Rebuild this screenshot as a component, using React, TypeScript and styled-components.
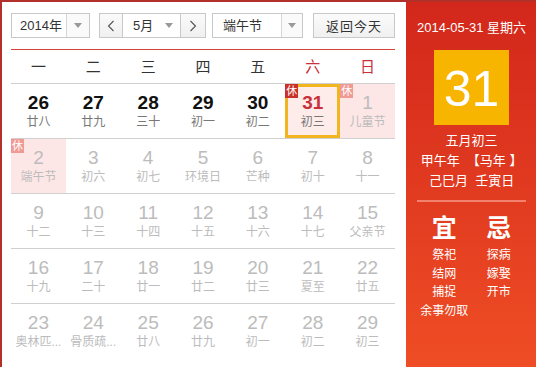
import React from "react";
import styled, { createGlobalStyle, css } from "styled-components";

const Global = createGlobalStyle`
  html, body { margin: 0; padding: 0; background: #fff; }
  body { font-family: "Liberation Sans", "Noto Sans CJK SC", sans-serif; }
  * { box-sizing: border-box; }
`;

const Root = styled.div`
  width: 536px;
  height: 367px;
  display: flex;
  border-top: 2px solid #b3302a;
  border-left: 2px solid #b3302a;
  overflow: hidden;
`;

const LeftPanel = styled.div`
  width: 404px;
  flex: none;
  padding: 11px 11px 0 9px;
  background: #fff;
`;

const Toolbar = styled.div`
  display: flex;
  align-items: center;
  height: 25px;
`;

const Select = styled.div<{ $w: number; $ml?: number }>`
  display: flex;
  height: 25px;
  width: ${(p) => p.$w}px;
  margin-left: ${(p) => p.$ml ?? 0}px;
  border: 1px solid #c8c8c8;
  background: #fff;
  font-size: 13px;
  color: #333;
`;

const SelectLabel = styled.div<{ $pl: number }>`
  flex: 1;
  display: flex;
  align-items: center;
  padding-left: ${(p) => p.$pl}px;
  line-height: 23px;
`;

const ArrowArea = styled.div<{ $w: number; $divider?: boolean }>`
  width: ${(p) => p.$w}px;
  display: flex;
  align-items: center;
  justify-content: center;
  ${(p) =>
    p.$divider &&
    css`
      border-left: 1px solid #d6d6d6;
      background: #fafafa;
    `}
`;

const Triangle = styled.span`
  width: 0;
  height: 0;
  border-left: 4px solid transparent;
  border-right: 4px solid transparent;
  border-top: 5px solid #999;
`;

const NavButton = styled.div<{ $side: "l" | "r"; $ml?: number }>`
  width: ${(p) => (p.$side === "l" ? 23 : 25)}px;
  height: 25px;
  margin-left: ${(p) => p.$ml ?? 0}px;
  display: flex;
  align-items: center;
  justify-content: center;
  border: 1px solid #c8c8c8;
  ${(p) => (p.$side === "l" ? "border-right: none;" : "border-left: none;")}
  background: linear-gradient(#fafafa, #f0f0f0);
`;

const MonthSelect = styled.div`
  width: 59px;
  height: 25px;
  display: flex;
  border: 1px solid #c8c8c8;
  background: #fff;
  font-size: 13px;
  color: #333;
`;

const TodayButton = styled.div`
  margin-left: auto;
  width: 82px;
  height: 25px;
  display: flex;
  align-items: center;
  justify-content: center;
  border: 1px solid #c8c8c8;
  background: linear-gradient(#fbfbfb, #f0f0f0);
  font-size: 13px;
  color: #333;
  letter-spacing: 1px;
`;

const RedRule = styled.div`
  height: 1px;
  background: #d8423a;
  margin-top: 11px;
`;

const WeekHeader = styled.div`
  display: grid;
  grid-template-columns: repeat(7, 1fr);
  height: 34px;
  border-bottom: 1px solid #d0d0d0;
`;

const WeekDay = styled.div<{ $weekend: boolean }>`
  display: flex;
  align-items: center;
  justify-content: center;
  font-size: 15px;
  color: ${(p) => (p.$weekend ? "#c9313a" : "#333")};
  padding-bottom: 2px;
`;

const Row = styled.div`
  display: grid;
  grid-template-columns: repeat(7, 1fr);
  height: 55px;
  border-bottom: 1px solid #d0d0d0;
  &:last-child { border-bottom: none; }
`;

const Cell = styled.div<{ $holiday: boolean; $selected: boolean }>`
  position: relative;
  display: flex;
  flex-direction: column;
  align-items: center;
  padding-top: 9px;
  min-width: 0;
  background: ${(p) => (p.$selected ? "#fdecea" : p.$holiday ? "#fde6e6" : "transparent")};
  ${(p) =>
    p.$selected &&
    css`
      box-shadow: inset 0 0 0 3px #f1b51f;
    `}
`;

const DayNum = styled.div<{ $tone: "cur" | "red" | "other" }>`
  font-size: 19px;
  line-height: 20px;
  font-weight: ${(p) => (p.$tone === "other" ? "normal" : "bold")};
  color: ${(p) => (p.$tone === "red" ? "#c9313a" : p.$tone === "cur" ? "#111" : "#bcbcbc")};
`;

const Lunar = styled.div<{ $other: boolean }>`
  font-size: 12px;
  line-height: 16px;
  margin-top: 1px;
  white-space: nowrap;
  color: ${(p) => (p.$other ? "#bcbcbc" : "#777")};
`;

const Badge = styled.span<{ $light: boolean }>`
  position: absolute;
  top: 0;
  left: 0;
  width: 13px;
  height: 14px;
  font-size: 11px;
  line-height: 14px;
  text-align: center;
  color: #fff;
  background: ${(p) => (p.$light ? "#f09a94" : "#c9302a")};
`;

const RightPanel = styled.div`
  flex: 1;
  display: flex;
  flex-direction: column;
  align-items: center;
  padding: 17px 11px 0;
  background: linear-gradient(#d2271b, #ef4d25);
  color: #fff;
`;

const DateLine = styled.div`
  font-size: 13px;
  line-height: 18px;
  white-space: nowrap;
`;

const BigDay = styled.div`
  margin-top: 13px;
  width: 75px;
  height: 75px;
  background: #f8b500;
  display: flex;
  align-items: center;
  justify-content: center;
  font-size: 50px;
  line-height: 1;
  padding-top: 2px;
`;

const LunarInfo = styled.div`
  margin-top: 6px;
  font-size: 13px;
  line-height: 20px;
  text-align: center;
  white-space: pre;
`;

const PinkRule = styled.div`
  align-self: stretch;
  height: 2px;
  background: #f2826e;
  margin-top: 9px;
`;

const Almanac = styled.div`
  align-self: stretch;
  display: grid;
  grid-template-columns: 1fr 1fr;
  margin-top: 11px;
`;

const AlmanacCol = styled.div`
  display: flex;
  flex-direction: column;
  align-items: center;
`;

const AlmanacTitle = styled.div`
  font-size: 25px;
  font-weight: bold;
  line-height: 30px;
  margin-bottom: 3px;
`;

const AlmanacItem = styled.div`
  font-size: 12px;
  line-height: 18.5px;
  white-space: nowrap;
`;

const Chevron = ({ dir }: { dir: "l" | "r" }) => (
  <svg width="8" height="12" viewBox="0 0 8 12">
    <path
      d={dir === "l" ? "M6.5 1 L1.5 6 L6.5 11" : "M1.5 1 L6.5 6 L1.5 11"}
      fill="none"
      stroke="#555"
      strokeWidth="1.1"
    />
  </svg>
);

type Day = {
  n: number;
  l: string;
  other?: boolean;
  holiday?: boolean;
  rest?: boolean;
  selected?: boolean;
};

const weeks: Day[][] = [
  [
    { n: 26, l: "廿八" },
    { n: 27, l: "廿九" },
    { n: 28, l: "三十" },
    { n: 29, l: "初一" },
    { n: 30, l: "初二" },
    { n: 31, l: "初三", selected: true, rest: true },
    { n: 1, l: "儿童节", other: true, holiday: true, rest: true },
  ],
  [
    { n: 2, l: "端午节", other: true, holiday: true, rest: true },
    { n: 3, l: "初六", other: true },
    { n: 4, l: "初七", other: true },
    { n: 5, l: "环境日", other: true },
    { n: 6, l: "芒种", other: true },
    { n: 7, l: "初十", other: true },
    { n: 8, l: "十一", other: true },
  ],
  [
    { n: 9, l: "十二", other: true },
    { n: 10, l: "十三", other: true },
    { n: 11, l: "十四", other: true },
    { n: 12, l: "十五", other: true },
    { n: 13, l: "十六", other: true },
    { n: 14, l: "十七", other: true },
    { n: 15, l: "父亲节", other: true },
  ],
  [
    { n: 16, l: "十九", other: true },
    { n: 17, l: "二十", other: true },
    { n: 18, l: "廿一", other: true },
    { n: 19, l: "廿二", other: true },
    { n: 20, l: "廿三", other: true },
    { n: 21, l: "夏至", other: true },
    { n: 22, l: "廿五", other: true },
  ],
  [
    { n: 23, l: "奥林匹...", other: true },
    { n: 24, l: "骨质疏...", other: true },
    { n: 25, l: "廿八", other: true },
    { n: 26, l: "廿九", other: true },
    { n: 27, l: "初一", other: true },
    { n: 28, l: "初二", other: true },
    { n: 29, l: "初三", other: true },
  ],
];

const weekDays = ["一", "二", "三", "四", "五", "六", "日"];

export default function App() {
  return (
    <>
      <Global />
      <Root>
        <LeftPanel>
          <Toolbar>
            <Select $w={79}>
              <SelectLabel $pl={8}>2014年</SelectLabel>
              <ArrowArea $w={23} $divider>
                <Triangle />
              </ArrowArea>
            </Select>
            <NavButton $side="l" $ml={9}>
              <Chevron dir="l" />
            </NavButton>
            <MonthSelect>
              <SelectLabel $pl={10}>5月</SelectLabel>
              <ArrowArea $w={22}>
                <Triangle />
              </ArrowArea>
            </MonthSelect>
            <NavButton $side="r">
              <Chevron dir="r" />
            </NavButton>
            <Select $w={91} $ml={6}>
              <SelectLabel $pl={10}>端午节</SelectLabel>
              <ArrowArea $w={21} $divider>
                <Triangle />
              </ArrowArea>
            </Select>
            <TodayButton>返回今天</TodayButton>
          </Toolbar>
          <RedRule />
          <WeekHeader>
            {weekDays.map((w, i) => (
              <WeekDay key={w} $weekend={i >= 5}>
                {w}
              </WeekDay>
            ))}
          </WeekHeader>
          {weeks.map((wk, ri) => (
            <Row key={ri}>
              {wk.map((d, ci) => (
                <Cell key={ci} $holiday={!!d.holiday} $selected={!!d.selected}>
                  {d.rest && <Badge $light={!!d.other}>休</Badge>}
                  <DayNum $tone={d.selected ? "red" : d.other ? "other" : "cur"}>{d.n}</DayNum>
                  <Lunar $other={!!d.other}>{d.l}</Lunar>
                </Cell>
              ))}
            </Row>
          ))}
        </LeftPanel>
        <RightPanel>
          <DateLine>2014-05-31 星期六</DateLine>
          <BigDay>31</BigDay>
          <LunarInfo>{"五月初三\n甲午年  【马年 】\n己巳月  壬寅日"}</LunarInfo>
          <PinkRule />
          <Almanac>
            <AlmanacCol>
              <AlmanacTitle>宜</AlmanacTitle>
              <AlmanacItem>祭祀</AlmanacItem>
              <AlmanacItem>结网</AlmanacItem>
              <AlmanacItem>捕捉</AlmanacItem>
              <AlmanacItem>余事勿取</AlmanacItem>
            </AlmanacCol>
            <AlmanacCol>
              <AlmanacTitle>忌</AlmanacTitle>
              <AlmanacItem>探病</AlmanacItem>
              <AlmanacItem>嫁娶</AlmanacItem>
              <AlmanacItem>开市</AlmanacItem>
            </AlmanacCol>
          </Almanac>
        </RightPanel>
      </Root>
    </>
  );
}
